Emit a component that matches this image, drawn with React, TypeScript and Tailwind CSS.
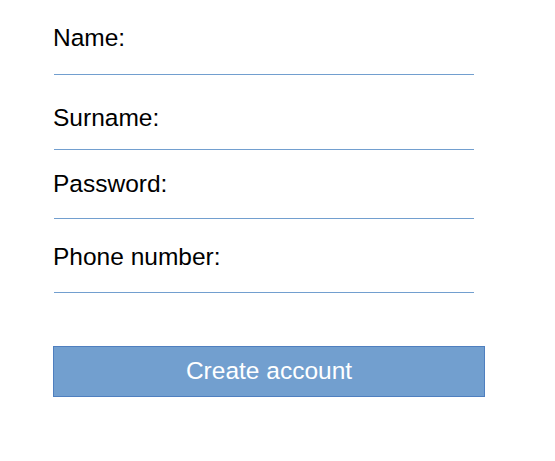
export default function App() {
  const font = { fontFamily: '"Liberation Sans", Arial, sans-serif' };
  return (
    <div className="w-[555px] h-[461px] bg-white" style={font}>
      <div className="flex flex-col pl-[53px] pt-[24px]">
        <label className="text-[24.5px] leading-[28px] text-black">Name:</label>
        <div className="mt-[22px] ml-px w-[420px] h-px bg-[#729fcf]" />
        <label className="mt-[29px] text-[24.5px] leading-[28px] text-black">Surname:</label>
        <div className="mt-[17px] ml-px w-[420px] h-px bg-[#729fcf]" />
        <label className="mt-[20px] text-[24.5px] leading-[28px] text-black">Password:</label>
        <div className="mt-[20px] ml-px w-[420px] h-px bg-[#729fcf]" />
        <label className="mt-[24px] text-[24.5px] leading-[28px] text-black">Phone number:</label>
        <div className="mt-[21px] ml-px w-[420px] h-px bg-[#729fcf]" />
        <button
          type="button"
          className="mt-[53px] w-[432px] h-[51px] border border-[#4f7fbf] bg-[#729fcf] text-white text-[24.5px] leading-none"
        >
          Create account
        </button>
      </div>
    </div>
  );
}
